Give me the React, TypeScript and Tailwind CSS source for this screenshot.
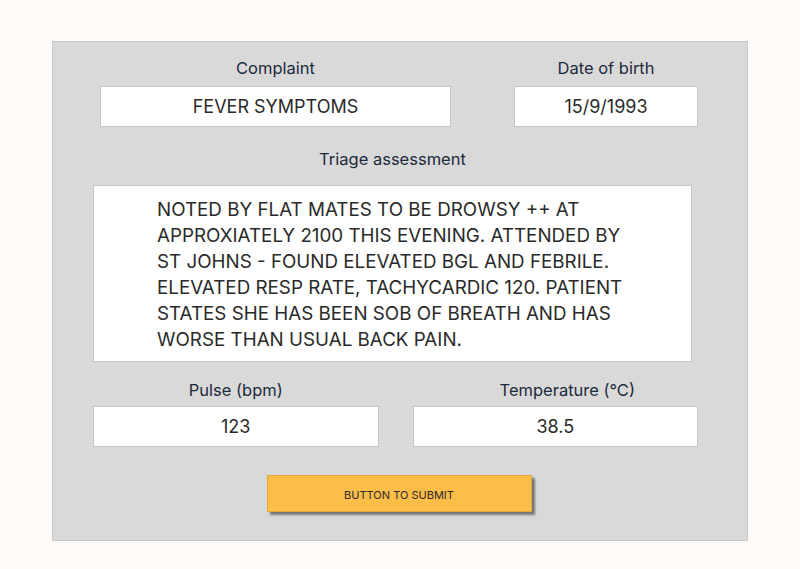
import React from "react";

const font = { fontFamily: "Inter, 'Noto Sans', sans-serif" };

function Field({
  label,
  value,
  className,
  gap = "mt-[8px]",
  labelClass = "",
}: {
  label: string;
  value: string;
  className?: string;
  gap?: string;
  labelClass?: string;
}) {
  return (
    <div className={className}>
      <p className={`${labelClass} text-center text-[16.5px] leading-5 text-[#1b2a3d]`}>{label}</p>
      <div className={`${gap} flex h-[41px] items-center justify-center border border-[#c6c6c6] bg-white text-[18px] text-[#2a2a2a]`}>
        {value}
      </div>
    </div>
  );
}

export default function App() {
  return (
    <div className="h-[569px] w-[800px] bg-[#fdfaf7] pl-[52px] pt-[41px]" style={font}>
      <div className="w-[696px] border border-[#c9c9c9] bg-[#d9d9d9] pb-[28px] pl-[40px] pr-[49px] pt-[16px]">
        <div className="ml-[7px] flex gap-[63px]">
          <Field label="Complaint" value="FEVER SYMPTOMS" className="w-[351px]" />
          <Field label="Date of birth" value="15/9/1993" className="w-[184px]" />
        </div>

        <p className="mr-[6px] mt-[22px] text-center text-[16.5px] leading-5 text-[#1b2a3d]">Triage assessment</p>
        <div className="mt-[16px] h-[177px] w-[599px] border border-[#c6c6c6] bg-white pb-[9px] pl-[63px] pt-[11px] text-[18.8px] leading-[26px] text-[#2a2a2a]">
          NOTED BY FLAT MATES TO BE DROWSY ++ AT
          <br />
          APPROXIATELY 2100 THIS EVENING. ATTENDED BY
          <br />
          ST JOHNS - FOUND ELEVATED BGL AND FEBRILE.
          <br />
          ELEVATED RESP RATE, TACHYCARDIC 120. PATIENT
          <br />
          STATES SHE HAS BEEN SOB OF BREATH AND HAS
          <br />
          WORSE THAN USUAL BACK PAIN.
        </div>

        <div className="mt-[18px] grid grid-cols-2 gap-[34px]">
          <Field label="Pulse (bpm)" value="123" gap="mt-[6px]" />
          <Field label="Temperature (°C)" value="38.5" gap="mt-[6px]" labelClass="pl-[24px]" />
        </div>

        <div className="mt-[28px] flex justify-center">
          <button className="ml-[7px] h-[37px] w-[265px] border border-[#e0a93c] bg-[#fdbe49] pt-[3px] text-[11px] text-[#2a2a2a] shadow-[3px_3px_2px_rgba(0,0,0,0.45)]">
            BUTTON TO SUBMIT
          </button>
        </div>
      </div>
    </div>
  );
}
